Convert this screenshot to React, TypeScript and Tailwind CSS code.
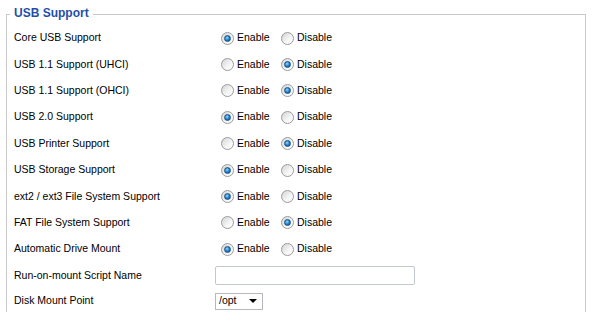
const rows: { label: string; on: boolean }[] = [
  { label: 'Core USB Support', on: true },
  { label: 'USB 1.1 Support (UHCI)', on: false },
  { label: 'USB 1.1 Support (OHCI)', on: false },
  { label: 'USB 2.0 Support', on: true },
  { label: 'USB Printer Support', on: false },
  { label: 'USB Storage Support', on: true },
  { label: 'ext2 / ext3 File System Support', on: true },
  { label: 'FAT File System Support', on: false },
  { label: 'Automatic Drive Mount', on: true },
]

function Radio({ checked }: { checked: boolean }) {
  return (
    <span className="flex h-[13px] w-[13px] shrink-0 items-center justify-center rounded-full border border-[#9a9b9b] bg-[linear-gradient(135deg,#d4d4d4,#f6f6f6_60%,#ffffff)]">
      {checked && (
        <span className="h-[7px] w-[7px] rounded-full border border-[#1a4f86] bg-[radial-gradient(circle_at_40%_35%,#8fd8ff,#1a7ccc_55%,#0a4c93)]" />
      )}
    </span>
  )
}

function Choice({ on }: { on: boolean }) {
  return (
    <div className="ml-[6px] flex items-center">
      <div className="flex w-[60px] items-center gap-[3px]">
        <Radio checked={on} />
        <span>Enable</span>
      </div>
      <div className="flex items-center gap-[3px]">
        <Radio checked={!on} />
        <span>Disable</span>
      </div>
    </div>
  )
}

export default function App() {
  return (
    <div className="min-h-[312px] bg-white pt-[5px] font-['Liberation_Sans',Arial,sans-serif] text-[10.5px] text-black">
      <fieldset className="mx-[6px] border border-[#c8c8c8] pl-[7px] pt-[2px]">
        <legend className="-ml-[4px] px-[4px] pb-[2px] text-[12px] font-bold leading-[16px] text-[#1f4fa8]">
          USB Support
        </legend>
        {rows.map((r) => (
          <div key={r.label} className="flex h-[26.4px] items-center">
            <div className="w-[201px]">{r.label}</div>
            <Choice on={r.on} />
          </div>
        ))}
        <div className="flex h-[26px] items-center">
          <div className="w-[201px]">Run-on-mount Script Name</div>
          <div className="h-[19px] w-[200px] rounded-[2px] border border-[#c3c7cf] bg-white" />
        </div>
        <div className="flex h-[25px] items-center">
          <div className="w-[201px]">Disk Mount Point</div>
          <div className="flex h-[17px] w-[48px] items-center justify-between border border-[#b5b8bd] bg-white pl-[3px] pr-[5px]">
            <span>/opt</span>
            <span className="h-0 w-0 border-x-[4px] border-t-[4px] border-x-transparent border-t-black" />
          </div>
        </div>
      </fieldset>
    </div>
  )
}
